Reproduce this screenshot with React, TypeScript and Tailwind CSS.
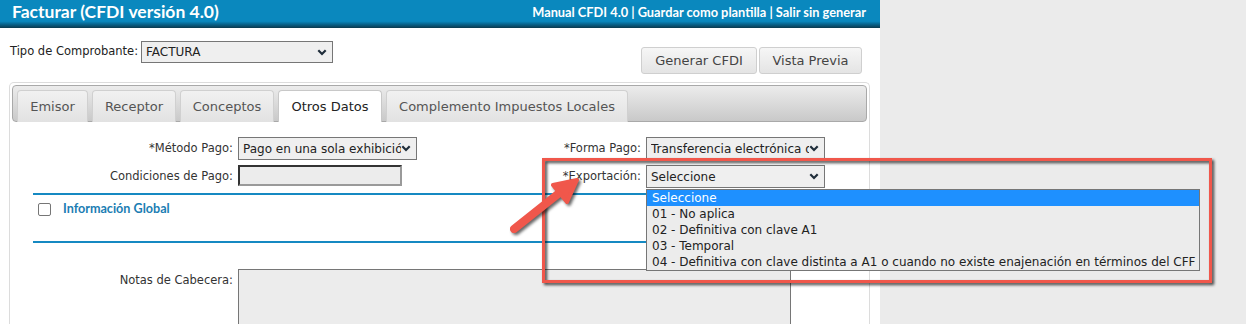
const sans = "font-['DejaVu_Sans',Verdana,sans-serif]";
const head = "font-['Lato','Open_Sans',sans-serif]";

function Chevron() {
  return (
    <svg width="10" height="7" viewBox="0 0 10 7" className="shrink-0">
      <path d="M1.3 1.3 5 5 8.7 1.3" fill="none" stroke="#1f2d3a" strokeWidth="2.2" />
    </svg>
  );
}

function Select({ value, w, h }: { value: string; w: string; h: string }) {
  return (
    <div
      className={`${w} ${h} flex shrink-0 items-center border border-[#767676] bg-[#efefef] pl-[4px] pr-[5px] text-[12px] text-[#222] ${sans}`}
    >
      <span className="flex-1 overflow-hidden whitespace-nowrap">{value}</span>
      <Chevron />
    </div>
  );
}

const tabs = [
  { label: "Emisor", w: "w-[71px]" },
  { label: "Receptor", w: "w-[84px]" },
  { label: "Conceptos", w: "w-[94px]" },
  { label: "Otros Datos", w: "w-[104px]", active: true },
  { label: "Complemento Impuestos Locales", w: "w-[242px]" },
];

const options = [
  "01 - No aplica",
  "02 - Definitiva con clave A1",
  "03 - Temporal",
  "04 - Definitiva con clave distinta a A1 o cuando no existe enajenación en términos del CFF",
];

export default function App() {
  const label = `shrink-0 text-right pr-[5px] pt-[3px] text-[11.5px] text-[#333] ${sans}`;

  return (
    <div className="relative flex h-[324px] w-[1246px] items-start overflow-hidden bg-[#ebebeb]">
      <div className="flex h-[324px] w-[880px] shrink-0 flex-col overflow-hidden bg-white">
        {/* title bar */}
        <div className="flex h-[28px] shrink-0 items-center justify-between bg-[linear-gradient(to_bottom,#0a88be_0%,#0a88be_76%,#086690_86%,#0b3a4e_100%)] pb-[3px] pl-[12px] pr-[14px]">
          <span className={`text-[17.5px] font-bold text-white ${head}`}>Facturar (CFDI versión 4.0)</span>
          <span className={`text-[12.8px] font-bold text-white ${head}`}>
            Manual CFDI 4.0 | Guardar como plantilla | Salir sin generar
          </span>
        </div>

        {/* tipo + buttons */}
        <div className="flex h-[54px] shrink-0 justify-between pl-[10px] pr-[18px]">
          <div className="mt-[13px] flex h-[22px] items-center gap-[3px]">
            <span className={`text-[11.5px] text-[#222] ${sans}`}>Tipo de Comprobante:</span>
            <Select value="FACTURA" w="w-[192px]" h="h-[22px]" />
          </div>
          <div className="mt-[19px] flex gap-[2px]">
            {[
              { b: "Generar CFDI", w: "w-[116px]" },
              { b: "Vista Previa", w: "w-[103px]" },
            ].map(({ b, w }) => (
              <div
                key={b}
                className={`${w} flex h-[27px] items-center justify-center rounded-[3px] border border-[#cfcfcf] bg-[linear-gradient(to_bottom,#f6f6f6,#e4e4e4)] text-[13px] text-[#444] ${sans}`}
              >
                {b}
              </div>
            ))}
          </div>
        </div>

        {/* tabs widget */}
        <div className="ml-[9px] flex w-[861px] shrink-0 flex-col rounded-t-[5px] border border-b-0 border-[#dcdcdc] p-[2px] pb-0">
          <div className="flex h-[37px] shrink-0 items-end gap-[4px] rounded-[4px] border border-[#a9a9a9] bg-[linear-gradient(to_bottom,#ececec,#c9c9c9)] pl-[4px]">
            {tabs.map((t) => (
              <div
                key={t.label}
                className={`${t.w} -mb-[1px] flex h-[32px] items-center justify-center rounded-t-[4px] border border-b-0 text-[13px] ${sans} ${
                  t.active
                    ? "border-[#c8c8c8] bg-white text-[#222]"
                    : "border-[#d0d0d0] bg-[linear-gradient(to_bottom,#f1f1f1,#e2e2e2)] text-[#555]"
                }`}
              >
                {t.label}
              </div>
            ))}
          </div>

          {/* Otros Datos */}
          <div className="flex flex-col pt-[15px]">
            <div className="flex h-[23px] items-start">
              <span className={`w-[226px] ${label}`}>*Método Pago:</span>
              <Select value="Pago en una sola exhibición" w="w-[179px]" h="h-[23px]" />
              <span className={`w-[229px] ${label}`}>*Forma Pago:</span>
              <Select value="Transferencia electrónica de fondos" w="w-[179px]" h="h-[23px]" />
            </div>
            <div className="mt-[5px] flex h-[23px] items-start">
              <span className={`w-[226px] ${label}`}>Condiciones de Pago:</span>
              <div className="h-[21px] w-[164px] shrink-0 border-2 border-b-[#9a9a9a] border-l-[#333] border-r-[#9a9a9a] border-t-[#333] bg-[#ececec]" />
              <span className={`w-[244px] ${label}`}>*Exportación:</span>
              <Select value="Seleccione" w="w-[179px]" h="h-[23px]" />
            </div>

            <div className="ml-[21px] mr-[8px] mt-[5px] flex h-[50px] flex-col justify-between border-y-2 border-[#1589c2]">
              <div className="flex items-center gap-[12px] pl-[5px] pt-[5px]">
                <div className="h-[13px] w-[13px] rounded-[2px] border border-[#767676] bg-white" />
                <span className={`text-[12.6px] font-bold text-[#1a7db3] ${head}`}>Información Global</span>
              </div>
            </div>

            <div className="mt-[26px] flex items-start">
              <span className={`w-[226px] ${label}`}>Notas de Cabecera:</span>
              <div className="h-[80px] w-[553px] shrink-0 border border-[#767676] bg-[#ececec]" />
            </div>
          </div>
        </div>
      </div>

      {/* open select list */}
      <div className={`absolute left-[646px] top-[189px] w-[554px] border border-[#767676] bg-[#ececec] text-[12px] ${sans}`}>
        <div className="h-[16px] bg-[#1e90ff] pl-[5px] leading-[16px] text-white">Seleccione</div>
        {options.map((o) => (
          <div key={o} className="h-[16px] whitespace-nowrap pl-[5px] leading-[16px] text-[#222]">
            {o}
          </div>
        ))}
      </div>

      {/* annotation */}
      <div className="absolute left-[542px] top-[158px] h-[125px] w-[670px] border-[3.5px] border-[#f0574b] drop-shadow-[2px_2px_1.5px_rgba(0,0,0,0.75)]" />
      <svg
        className="absolute left-[500px] top-[165px] drop-shadow-[2px_2px_1.5px_rgba(0,0,0,0.6)]"
        width="90"
        height="80"
        viewBox="500 165 90 80"
      >
        <line x1="514" y1="229" x2="563" y2="190" stroke="#f0574b" strokeWidth="8" strokeLinecap="round" />
        <polygon
          points="577,180 553,185 567,202"
          fill="#f0574b"
          stroke="#f0574b"
          strokeWidth="4"
          strokeLinejoin="round"
        />
      </svg>
    </div>
  );
}
